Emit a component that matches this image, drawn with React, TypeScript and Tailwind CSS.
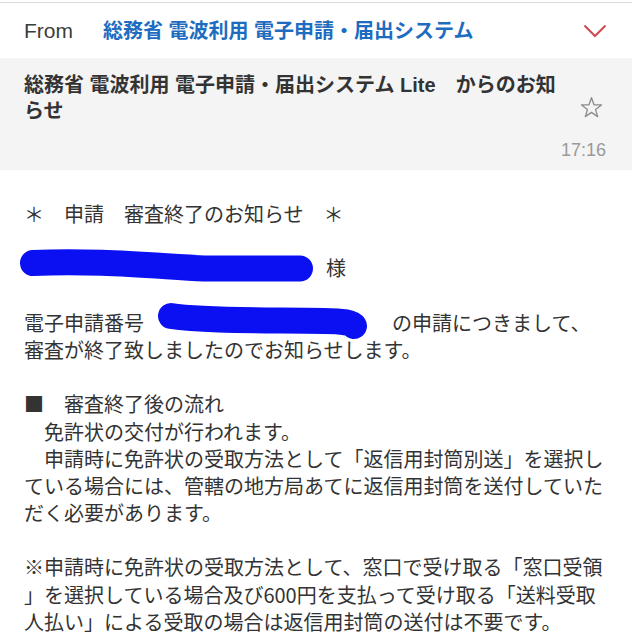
import React from "react";

const latin = "font-['Liberation_Sans','Noto_Sans_CJK_JP',sans-serif]";
const cjk = "font-['Noto_Sans_CJK_JP','Liberation_Sans',sans-serif]";

const Line: React.FC<{ children?: React.ReactNode }> = ({ children }) => (
  <div className="h-[27.2px] whitespace-nowrap">{children}</div>
);

export default function App() {
  return (
    <div className={`w-[632px] h-[640px] overflow-hidden bg-white ${latin}`}>
      <div className="pt-[2px]">
        {/* From row */}
        <div className="h-[56px] border-t border-[#dadada] flex items-center pl-[24px] pr-[24px]">
          <span className="w-[79px] text-[21px] text-[#3c3c3c]">From</span>
          <span className="text-[20px] font-semibold text-[#1d6cc0]">
            総務省 電波利用 電子申請・届出システム
          </span>
          <svg className="ml-auto mr-[1px]" width="24" height="14" viewBox="0 0 24 14" fill="none">
            <path d="M1.5 1.5 L12 12 L22.5 1.5" stroke="#d2474f" strokeWidth="2" />
          </svg>
        </div>

        {/* Subject */}
        <div className="h-[112px] bg-[#f4f4f4] flex pl-[24px] pr-[26px]">
          <div className="pt-[14px] text-[20px] leading-[26px] font-bold text-[#333]">
            <div className="whitespace-nowrap">総務省 電波利用 電子申請・届出システム Lite　からのお知</div>
            <div>らせ</div>
          </div>
          <div className="ml-auto flex flex-col items-end pt-[38px]">
            <svg className="mr-[3px]" width="23" height="23" viewBox="0 0 24 24" fill="none">
              <path
                d="M12 1.8 L14.6 9.1 L22.4 9.3 L16.2 14 L18.4 21.5 L12 17.1 L5.6 21.5 L7.8 14 L1.6 9.3 L9.4 9.1 Z"
                stroke="#8c8c8c"
                strokeWidth="1.4"
                strokeLinejoin="round"
              />
            </svg>
            <span className="mt-[21px] text-[18px] leading-[20px] text-[#9a9a9a]">17:16</span>
          </div>
        </div>

        {/* Body */}
        <div className={`pt-[30px] px-[24px] text-[20px] leading-[27.2px] text-[#333] ${cjk}`}>
          <Line>＊　申請　審査終了のお知らせ　＊</Line>
          <Line />
          <Line>
            <span className="relative inline-block w-[302px] h-[27.2px] align-top">
              <svg className="absolute left-0 top-0 overflow-visible" width="302" height="27" viewBox="0 0 302 27">
                <path
                  d="M9 9 C 70 6, 130 12, 180 14.5 L 276 14.5"
                  stroke="#0b10f2"
                  strokeWidth="26"
                  strokeLinecap="round"
                  fill="none"
                />
              </svg>
            </span>
            様
          </Line>
          <Line />
          <Line>
            電子申請番号
            <span className="relative inline-block w-[248px] h-[27.2px] align-top">
              <svg className="absolute left-0 top-0 overflow-visible" width="248" height="27" viewBox="0 0 248 27">
                <path
                  d="M27 7 C 60 12, 120 11, 180 12 C 200 12, 208 14, 210 17"
                  stroke="#0b10f2"
                  strokeWidth="26"
                  strokeLinecap="round"
                  fill="none"
                />
              </svg>
            </span>
            の申請につきまして、
          </Line>
          <Line>審査が終了致しましたのでお知らせします。</Line>
          <Line />
          <Line>■　審査終了後の流れ</Line>
          <Line>　免許状の交付が行われます。</Line>
          <Line>　申請時に免許状の受取方法として「返信用封筒別送」を選択し</Line>
          <Line>ている場合には、管轄の地方局あてに返信用封筒を送付していた</Line>
          <Line>だく必要があります。</Line>
          <Line />
          <Line>※申請時に免許状の受取方法として、窓口で受け取る「窓口受領</Line>
          <Line>」を選択している場合及び600円を支払って受け取る「送料受取</Line>
          <Line>人払い」による受取の場合は返信用封筒の送付は不要です。</Line>
        </div>
      </div>
    </div>
  );
}
